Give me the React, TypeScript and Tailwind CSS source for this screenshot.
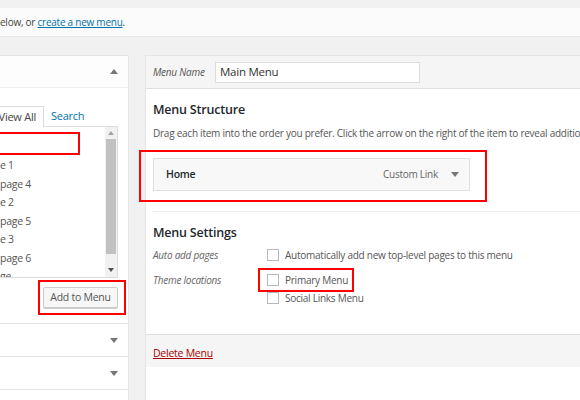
import React from "react";

function Up() {
  return (
    <svg width="8" height="5" viewBox="0 0 8 5"><polygon points="0,5 8,5 4,0" fill="#777" /></svg>
  );
}
function Down() {
  return (
    <svg width="8" height="5" viewBox="0 0 8 5"><polygon points="0,0 8,0 4,5" fill="#777" /></svg>
  );
}
function Box() {
  return <span className="inline-block w-[12px] h-[12px] border border-[#b4b9be] bg-white shrink-0" />;
}

export default function App() {
  const items = ["e 1", "page 4", "e 2", "page 5", "e 3", "page 6", "ge"];
  return (
    <div className="relative w-[580px] h-[400px] overflow-hidden bg-[#f1f1f1] text-[#444] font-['Open_Sans',sans-serif] text-[10px] tracking-[-0.25px]">
      <div className="mt-[8px] h-[29px] bg-[#fbfbfb] border-b border-[#e8e8e8] flex items-center text-[10px]">
        <span>
          elow, or <span className="text-[#0073aa] underline">create a new menu</span>.
        </span>
      </div>
      <div className="flex mt-[18px] gap-[16px]">
        {/* left column */}
        <div className="w-[129px] shrink-0 flex flex-col">
          <div className="bg-white border-r border-b border-t border-[#e5e5e5]">
            <div className="h-[32px] flex items-center justify-end pr-[10px] border-b border-[#eee] bg-[#fdfdfd]">
              <Up />
            </div>
            <div className="pt-[18px] pr-[10px]">
              <div className="flex items-end h-[21px]">
                <div className="h-[21px] w-[44px] border border-l-0 border-b-0 border-[#ddd] bg-white flex items-center justify-end pr-[7px] text-[11px] text-[#444] whitespace-nowrap relative z-10">
                  View All
                </div>
                <div className="h-[21px] flex items-center pl-[7px] text-[11px] text-[#0073aa]">Search</div>
              </div>
              <div className="h-[152px] border border-l-0 border-[#ddd] -mt-px flex overflow-hidden">
                <div className="flex-1 pt-[6px] text-[10.5px] text-[#555] leading-none">
                  <div className="h-[23px]" />
                  {items.map((t) => (
                    <div key={t} className="h-[18.5px] flex items-center whitespace-nowrap">{t}</div>
                  ))}
                </div>
                <div className="w-[12px] bg-[#f1f1f1] flex flex-col items-center">
                  <div className="h-[12px] flex items-center justify-center">
                    <svg width="6" height="4" viewBox="0 0 6 4"><polygon points="0,4 6,4 3,0" fill="#a3a3a3" /></svg>
                  </div>
                  <div className="w-[10px] h-[115px] bg-[#c1c1c1]" />
                  <div className="flex-1" />
                  <div className="h-[14px] flex items-center justify-center">
                    <svg width="6" height="4" viewBox="0 0 6 4"><polygon points="0,0 6,0 3,4" fill="#505050" /></svg>
                  </div>
                </div>
              </div>
              <div className="flex justify-end pt-[9px] pb-[15px]">
                <div className="h-[21px] w-[75px] border border-[#ccc] bg-[#f7f7f7] rounded-[2px] flex items-center justify-center text-[10.5px] text-[#555] shadow-[0_1px_0_#ccc]">
                  Add to Menu
                </div>
              </div>
            </div>
          </div>
          {[0, 1].map((i) => (
            <div key={i} className="h-[33px] bg-white border-r border-b border-[#e5e5e5] flex items-center justify-end pr-[10px]">
              <Down />
            </div>
          ))}
          <div className="h-[30px] bg-white border-r border-[#e5e5e5]" />
        </div>

        {/* right panel */}
        <div className="w-[460px] shrink-0 flex flex-col border border-[#e5e5e5] bg-white shadow-[0_1px_1px_rgba(0,0,0,0.04)]">
          <div className="h-[33px] bg-[#f5f5f5] border-b border-[#dfdfdf] flex items-center pl-[7px]">
            <span className="italic text-[10px] text-[#555] w-[62px]">Menu Name</span>
            <div className="h-[21px] w-[205px] border border-[#ddd] bg-white flex items-center pl-[4px] text-[11.5px] text-[#333]">
              Main Menu
            </div>
          </div>
          <div className="pl-[7px] pt-[12px]">
            <div className="text-[12.5px] font-semibold text-[#23282d] leading-[18px] tracking-[-0.2px]">Menu Structure</div>
            <div className="mt-[7px] text-[10px] text-[#555] leading-[14px] whitespace-nowrap">
              Drag each item into the order you prefer. Click the arrow on the right of the item to reveal additional configuration options.
            </div>
            <div className="mt-[18px] w-[317px] h-[33px] border border-[#dfdfdf] bg-[#f8f8f8] flex items-center pl-[12px] pr-[10px]">
              <span className="text-[10.5px] font-semibold text-[#23282d]">Home</span>
              <span className="ml-auto text-[10px] text-[#666] mr-[13px]">Custom Link</span>
              <Down />
            </div>
            <div className="mt-[20px] border-t border-[#eee]" />
            <div className="pt-[12px] text-[12.5px] font-semibold text-[#23282d] leading-[18px] tracking-[-0.2px]">Menu Settings</div>
            <div className="mt-[6px] flex items-center h-[14px]">
              <span className="italic text-[#666] w-[114px]">Auto add pages</span>
              <Box />
              <span className="ml-[6px] text-[#555]">Automatically add new top-level pages to this menu</span>
            </div>
            <div className="mt-[11px] flex">
              <span className="italic text-[#666] w-[114px] h-[14px] flex items-center">Theme locations</span>
              <div className="flex flex-col gap-[4px]">
                <div className="flex items-center h-[14px]">
                  <Box />
                  <span className="ml-[6px] text-[#555]">Primary Menu</span>
                </div>
                <div className="flex items-center h-[14px]">
                  <Box />
                  <span className="ml-[6px] text-[#555]">Social Links Menu</span>
                </div>
              </div>
            </div>
            <div className="h-[29px]" />
          </div>
          <div className="h-[33px] bg-[#f5f5f5] border-t border-[#dfdfdf] flex items-start pt-[11px] pl-[7px]">
            <span className="text-[#a00] underline text-[10.5px]">Delete Menu</span>
          </div>
        </div>
      </div>

      {/* annotation boxes */}
      <div className="absolute left-[-3px] top-[132px] w-[83px] h-[23px] border-2 border-[#ff0000]" />
      <div className="absolute left-[38px] top-[280px] w-[88px] h-[35px] border-2 border-[#ff0000]" />
      <div className="absolute left-[139px] top-[150px] w-[348px] h-[52px] border-2 border-[#ff0000]" />
      <div className="absolute left-[258px] top-[268px] w-[96px] h-[24px] border-2 border-[#ff0000]" />
    </div>
  );
}
